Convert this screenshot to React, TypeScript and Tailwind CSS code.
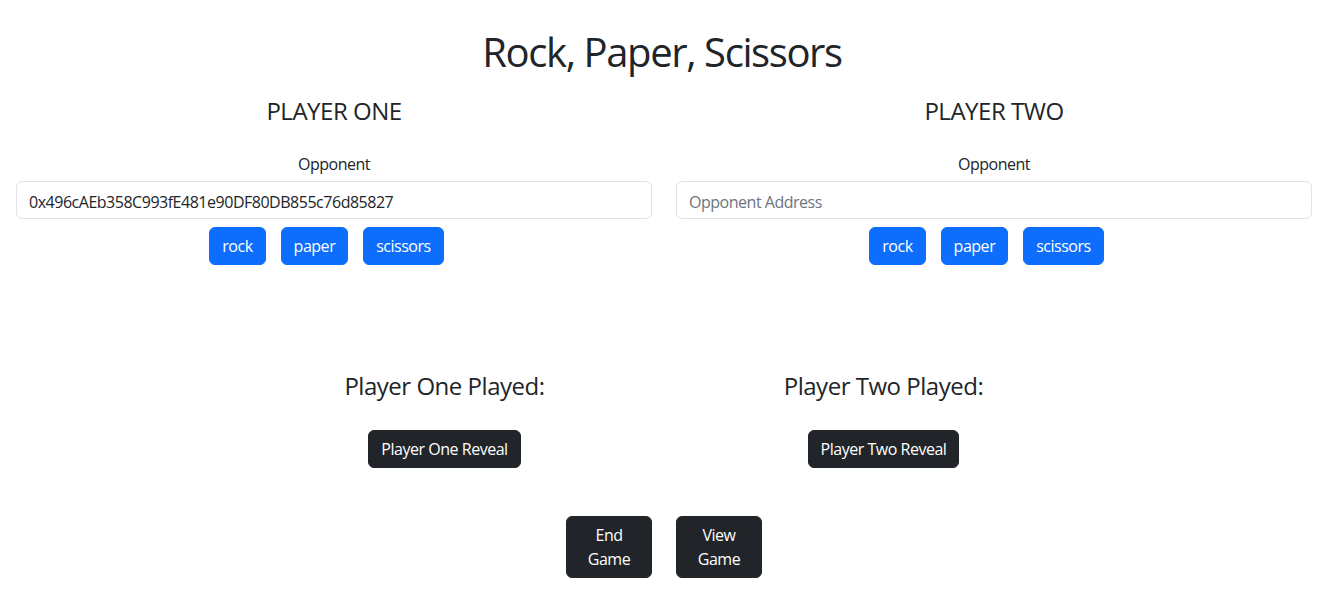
const font = { fontFamily: '"Open Sans", "Noto Sans", sans-serif' };

const blueBtn =
  'mr-[15px] rounded-md border border-[#0d6efd] bg-[#0d6efd] px-3 py-1.5 text-base leading-6 text-white';
const darkBtn =
  'rounded-md border border-[#212529] bg-[#212529] px-3 py-1.5 text-base leading-6 text-white';

function PlayerPanel({ title, value }: { title: string; value?: string }) {
  return (
    <div className="flex flex-col items-center">
      <h4 className="mt-[20px] text-[24px] leading-[29px]">{title}</h4>
      <label className="mt-[27px] text-base leading-6">Opponent</label>
      <input
        readOnly
        value={value ?? ''}
        placeholder="Opponent Address"
        className="mt-[5px] h-[38px] w-full rounded-md border border-[#dee2e6] px-3 pt-[3px] text-base text-[#212529] placeholder:text-[#6c757d] outline-none"
      />
      <div className="mt-2 flex">
        <button className={blueBtn}>rock</button>
        <button className={blueBtn}>paper</button>
        <button className={blueBtn}>scissors</button>
      </div>
    </div>
  );
}

export default function App() {
  return (
    <div className="min-h-[599px] bg-white text-[#212529] tracking-[-0.03em]" style={font}>
      <h1 className="pt-[28px] text-center text-[40px] leading-[48px] tracking-[-0.035em]">
        Rock, Paper, Scissors
      </h1>

      <div className="grid grid-cols-2 gap-6 pl-4 pr-3">
        <PlayerPanel title="PLAYER ONE" value="0x496cAEb358C993fE481e90DF80DB855c76d85827" />
        <PlayerPanel title="PLAYER TWO" />
      </div>

      <div className="mx-auto mt-[106px] grid w-[882px] grid-cols-2 pl-1">
        {['One', 'Two'].map((p) => (
          <div key={p} className="flex flex-col items-center">
            <h4 className="text-[24px] leading-[29px]">Player {p} Played:</h4>
            <button className={`${darkBtn} mt-[30px]`}>Player {p} Reveal</button>
          </div>
        ))}
      </div>

      <div className="mt-[48px] flex justify-center gap-6 pl-1">
        <button className={`${darkBtn} w-[86px]`}>End Game</button>
        <button className={`${darkBtn} w-[86px]`}>View Game</button>
      </div>
    </div>
  );
}
